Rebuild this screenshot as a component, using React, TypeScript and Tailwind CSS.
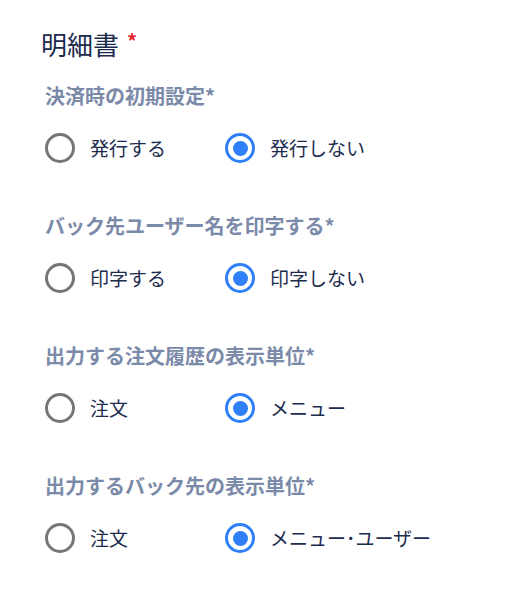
import React from "react";

const font = { fontFamily: '"Noto Sans CJK JP", "Noto Sans", sans-serif' };

function Radio({ checked, label }: { checked: boolean; label: string }) {
  return (
    <div className="flex items-center gap-[15px]">
      {checked ? (
        <span className="w-[30px] h-[30px] rounded-full border-[3px] border-[#2f80f8] flex items-center justify-center">
          <span className="w-[15px] h-[15px] rounded-full bg-[#2f80f8]" />
        </span>
      ) : (
        <span className="w-[30px] h-[30px] rounded-full border-[3px] border-[#767676]" />
      )}
      <span className="text-[19px] leading-[30px] text-[#1d2b4e]">{label}</span>
    </div>
  );
}

function Section({ title, a, b, first }: { title: string; a: string; b: string; first?: boolean }) {
  return (
    <div className={first ? "pl-[4px]" : "pl-[4px] mt-[51px]"}>
      <div className="text-[20px] leading-[24px] font-bold text-[#7b8aa8]">{title}*</div>
      <div className="flex mt-[25px]">
        <div className="w-[180px]">
          <Radio checked={false} label={a} />
        </div>
        <Radio checked={true} label={b} />
      </div>
    </div>
  );
}

export default function App() {
  return (
    <div className="w-[510px] h-[604px] bg-white pt-[28px] pl-[41px]" style={font}>
      <div className="flex items-start">
        <span className="text-[26px] leading-[32px] text-[#1b2b4d]">明細書</span>
        <span className="ml-[8px] mt-[3px] text-[20px] leading-[20px] font-bold text-[#e8262b]">*</span>
      </div>
      <div className="mt-[24px]">
        <Section first title="決済時の初期設定" a="発行する" b="発行しない" />
        <Section title="バック先ユーザー名を印字する" a="印字する" b="印字しない" />
        <Section title="出力する注文履歴の表示単位" a="注文" b="メニュー" />
        <Section title="出力するバック先の表示単位" a="注文" b="メニュー･ユーザー" />
      </div>
    </div>
  );
}
